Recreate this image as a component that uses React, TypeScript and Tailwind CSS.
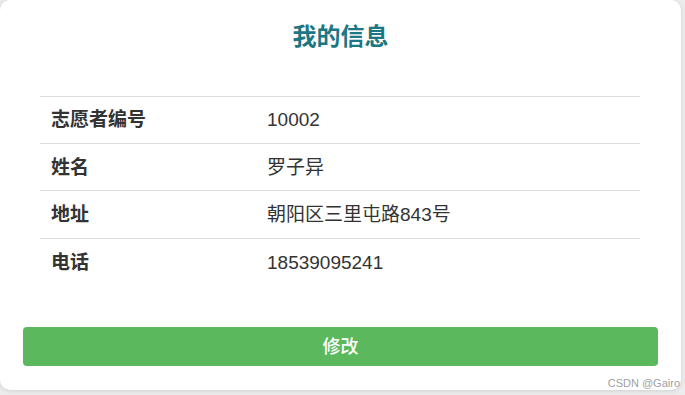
import React from "react";

const rows = [
  { label: "志愿者编号", value: "10002", h: "h-[46px]" },
  { label: "姓名", value: "罗子异", h: "h-[47px]" },
  { label: "地址", value: "朝阳区三里屯路843号", h: "h-[48px]" },
  { label: "电话", value: "18539095241", h: "h-[47px]" },
];

export default function App() {
  return (
    <div
      className="relative w-[685px] h-[395px] bg-[#ececec] overflow-hidden"
      style={{ fontFamily: '"Noto Sans CJK SC", "Noto Sans", sans-serif' }}
    >
      <div className="w-[681px] h-[390px] bg-white rounded-[10px] shadow-[0_1px_4px_rgba(0,0,0,0.12)] flex flex-col">
        <h1 className="mt-[18px] h-[34px] leading-[34px] text-center text-[24px] font-bold text-[#1b7783]">
          我的信息
        </h1>
        <div className="mt-[44px] mx-[40px] w-[600px] border-t border-[#dedede]">
          {rows.map((r, i) => (
            <div
              key={r.label}
              className={`flex items-baseline ${r.h} ${i > 0 ? "pt-[12px] border-t border-[#dedede]" : "pt-[11px]"}`}
            >
              <div className="w-[227px] pl-[11px] text-[19px] leading-[19px] font-bold text-[#333]">{r.label}</div>
              <div
                className="text-[19px] leading-[19px] text-[#333]"
                style={{ fontFamily: '"Liberation Sans", "Noto Sans CJK SC", sans-serif' }}
              >
                {r.value}
              </div>
            </div>
          ))}
        </div>
        <button className="mt-[42px] ml-[23px] w-[635px] h-[39px] rounded-[4px] bg-[#5cb85c] text-white text-[18px] font-medium flex items-center justify-center pb-[2px]">
          修改
        </button>
      </div>
      <div
        className="absolute right-[5px] bottom-[6px] text-[11px] leading-[12px] text-[#a0a0a0]"
        style={{ fontFamily: '"Liberation Sans", sans-serif' }}
      >
        CSDN @Gairo
      </div>
    </div>
  );
}
